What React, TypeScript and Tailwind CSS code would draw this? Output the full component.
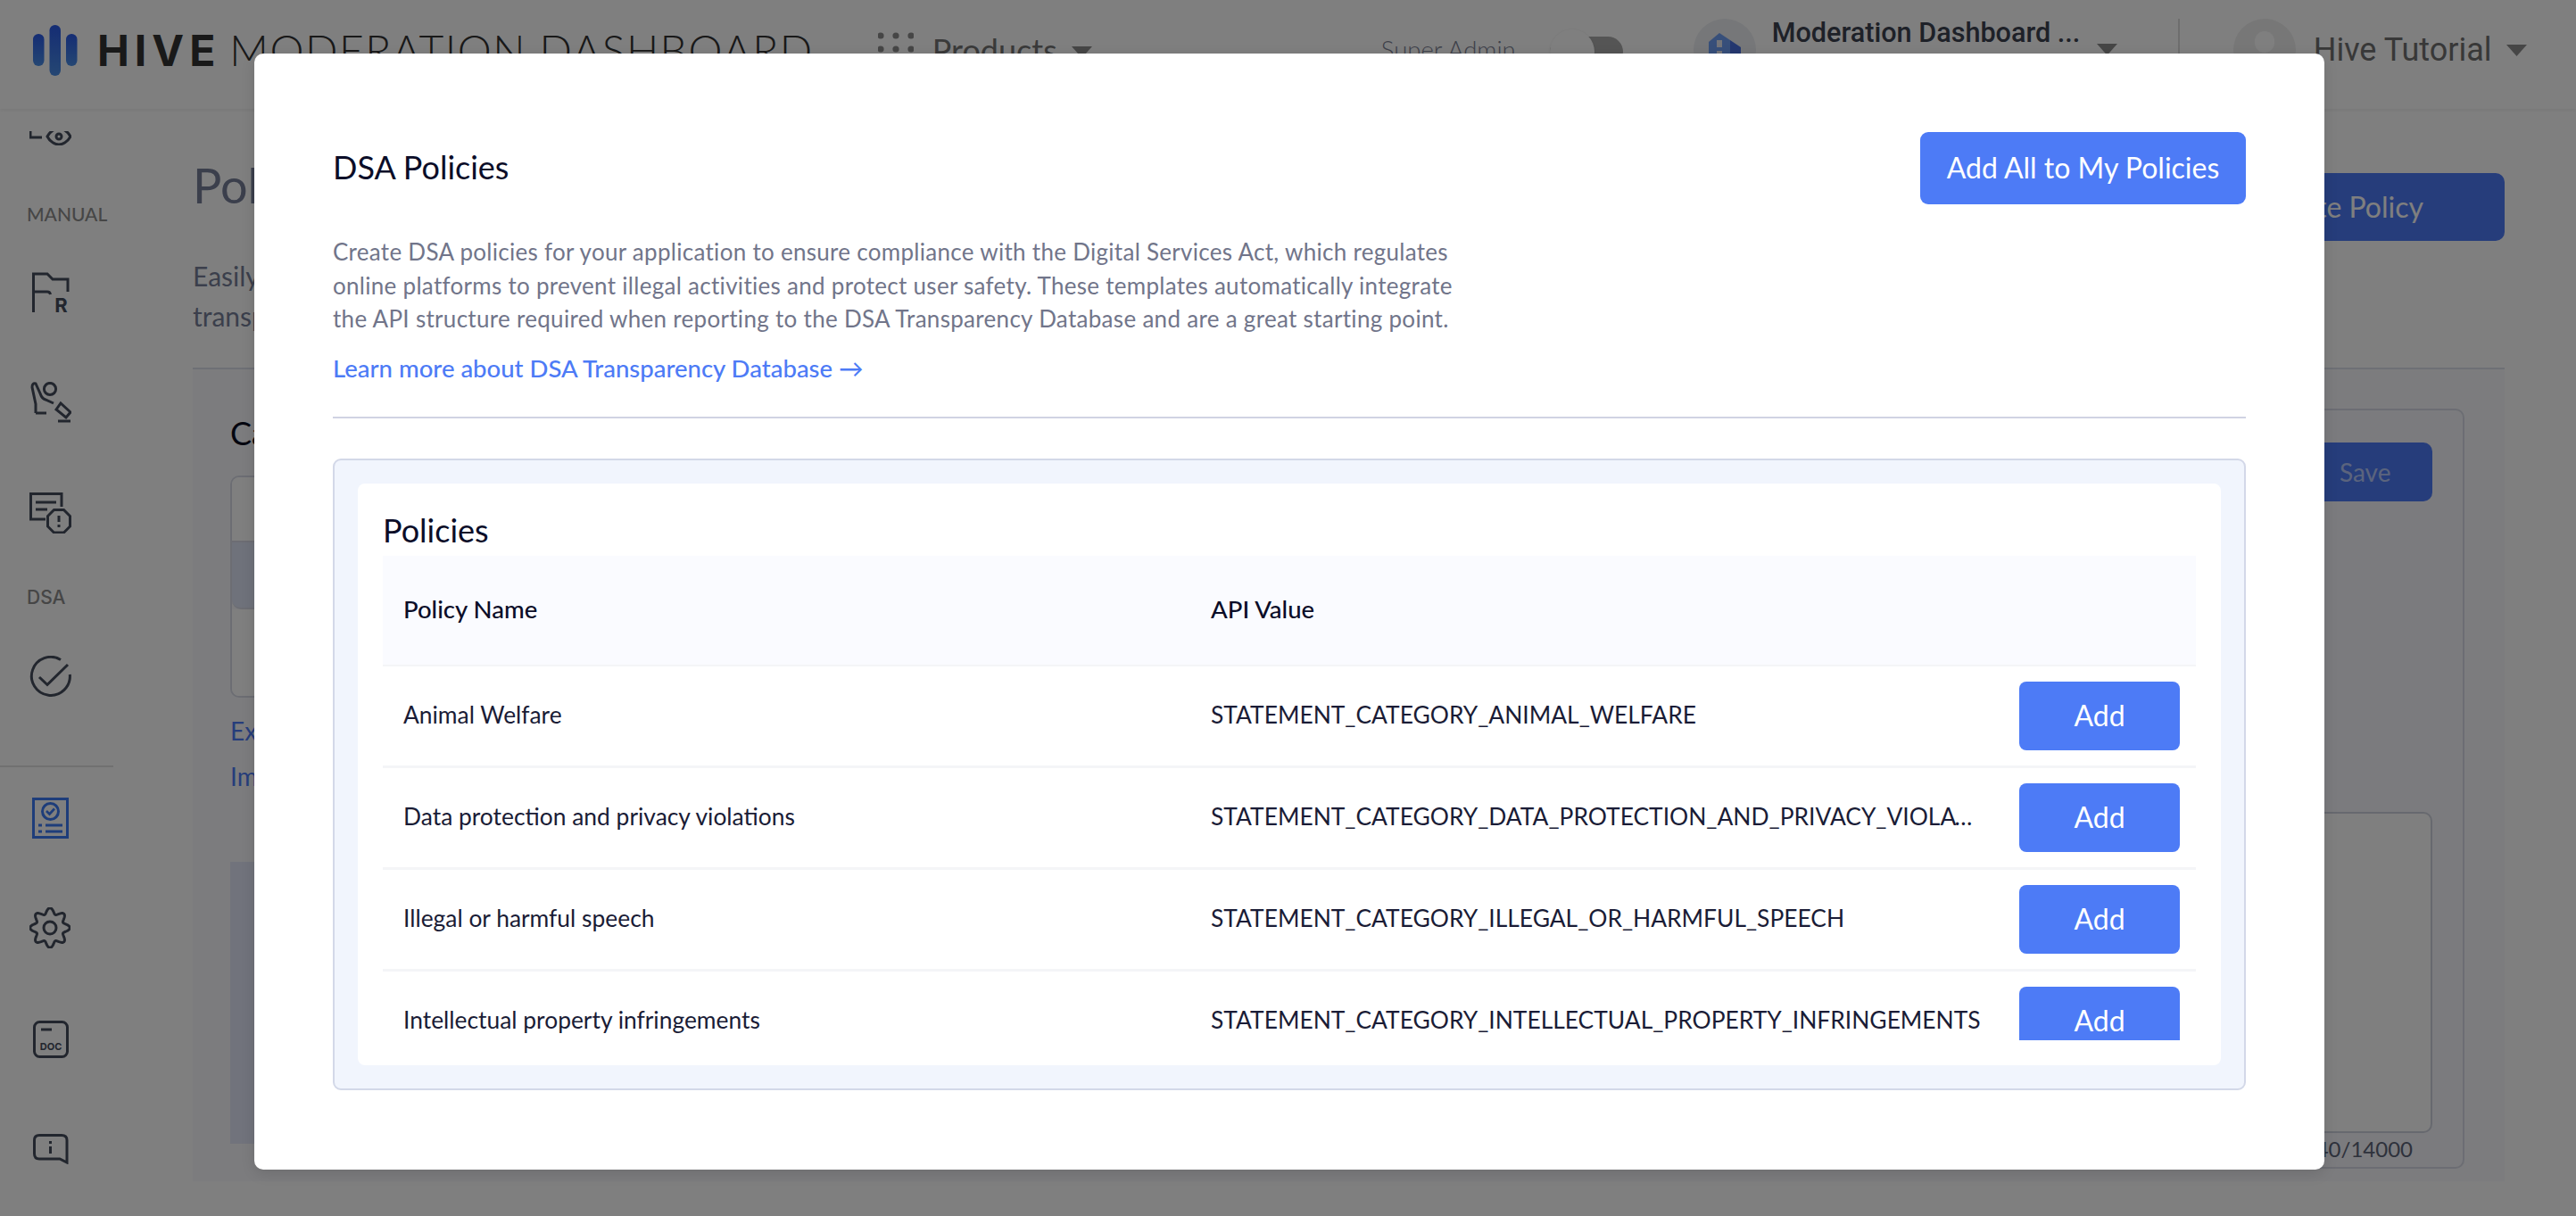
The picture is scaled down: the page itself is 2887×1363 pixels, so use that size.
import React from "react";

const gearPath = (() => {
  const pts: string[] = [];
  for (let i = 0; i < 240; i++) {
    const t = (i / 240) * Math.PI * 2;
    const r = 19 + 3.2 * Math.cos(8 * t);
    pts.push(`${(23 + r * Math.sin(t)).toFixed(2)} ${(23 - r * Math.cos(t)).toFixed(2)}`);
  }
  return "M" + pts.join("L") + "Z";
})();

const ic = "#454c5c";

function Bars() {
  return (
    <svg width="50" height="57" viewBox="0 0 50 57" className="shrink-0">
      <defs>
        <linearGradient id="hv" x1="0" y1="0" x2="0" y2="1">
          <stop offset="0" stopColor="#2a5ae8" />
          <stop offset="1" stopColor="#4a8ee6" />
        </linearGradient>
      </defs>
      <rect x="0" y="10" width="12.5" height="36" rx="6.2" fill="url(#hv)" />
      <rect x="18.5" y="0" width="12.5" height="57" rx="6.2" fill="url(#hv)" />
      <rect x="37" y="10" width="12.5" height="36" rx="6.2" fill="url(#hv)" />
    </svg>
  );
}

function Tri({ size = 23 }: { size?: number }) {
  return (
    <svg width={size} height={13} viewBox="0 0 23 13" className="shrink-0">
      <path d="M0 0H23L11.5 13Z" fill="#8c8c8c" />
    </svg>
  );
}

function Header() {
  return (
    <header className="relative flex h-[122px] shrink-0 items-center bg-white pb-[10px] pl-[37px] shadow-[0_2px_4px_rgba(0,0,0,0.06)]">
      <Bars />
      <div className="ml-[22px] whitespace-nowrap text-[48px] leading-none text-[#333]">
        <span className="font-[family-name:Inter,sans-serif] font-bold tracking-[6px]">HIVE</span>
        <span className="ml-[10px] font-light tracking-[1.5px]">MODERATION DASHBOARD</span>
      </div>
      <svg width="40" height="50" viewBox="0 0 40 50" className="ml-[72px] mt-[8px] shrink-0">
        {[3, 20, 37].map((x) =>
          [5, 20, 35].map((y) => <circle key={`${x}${y}`} cx={x} cy={y} r="3.6" fill="#8c8c8c" />)
        )}
      </svg>
      <span className="ml-[21px] text-[36px] text-[#757575]">Products</span>
      <span className="ml-[16px] mt-[4px]"><Tri /></span>
      <span className="ml-[324px] text-[27.5px] font-light text-[#7d8294]">Super Admin</span>
      <div className="ml-[38px] mt-[4px] flex h-[34px] w-[82px] items-center rounded-full bg-[#aaa]">
        <div className="h-[50px] w-[50px] shrink-0 rounded-full bg-white shadow-[0_0_3px_rgba(0,0,0,0.08)]" />
      </div>
      <div className="ml-[79px] flex h-[70px] w-[70px] shrink-0 items-start justify-center overflow-hidden rounded-full bg-[#eceef2] pt-[16px]">
        <svg width="36" height="50" viewBox="0 0 36 50" className="shrink-0">
          <path d="M0 10L12 0L24 8V50H0Z" fill="#6f9ef5" />
          <path d="M24 8L36 16V50H24Z" fill="#4a70e0" />
          <rect x="9" y="8" width="6" height="8" fill="#e6e9f2" />
          <rect x="9" y="20" width="6" height="8" fill="#e6e9f2" />
        </svg>
      </div>
      <div className="ml-[18px] -mt-[38px] w-[350px] whitespace-nowrap font-[family-name:Roboto,sans-serif] text-[30.6px] font-medium leading-[36px] text-[#3c4250]">
        Moderation Dashboard ...
      </div>
      <span className="ml-[14px] -mt-[2px]"><Tri /></span>
      <div className="ml-[68px] h-[70px] w-[2px] bg-[#ddd]" />
      <div className="ml-[60px] flex h-[70px] w-[70px] shrink-0 flex-col items-center rounded-full bg-[#eee] pt-[14px]">
        <div className="h-[24px] w-[22px] rounded-full bg-white" />
      </div>
      <span className="ml-[20px] font-[family-name:Roboto,sans-serif] text-[36px] text-[#707070]">Hive Tutorial</span>
      <span className="ml-[16px]"><Tri /></span>
    </header>
  );
}

function Sidebar() {
  const label = "text-[21px] leading-none text-[#8c8c8c] font-medium ml-[30px]";
  const stroke = { fill: "none", stroke: ic, strokeWidth: 3 };
  return (
    <aside className="flex w-[127px] shrink-0 flex-col bg-white shadow-[2px_0_4px_rgba(0,0,0,0.04)]">
      <div className="flex h-[738px] shrink-0 flex-col border-b-2 border-[#e2e2e2] pt-[25px]">
        <svg width="47" height="16" viewBox="0 0 47 16" className="ml-[33px] shrink-0">
          <path d="M1 0V7H14" {...stroke} />
          <path d="M20 6C23 0 29 -3 33 -3C37 -3 43 0 46 6C43 12 37 15 33 15C29 15 23 12 20 6Z" {...stroke} />
          <circle cx="33" cy="6" r="3" {...stroke} />
        </svg>
        <div className={`${label} mt-[66px] font-[family-name:Lato,sans-serif]`}>MANUAL</div>
        <svg width="46" height="46" viewBox="0 0 46 46" className="ml-[36px] mt-[55px] shrink-0">
          <path d="M1.5 45V2H17L23 8H40V22" {...stroke} />
          <path d="M1.5 22H17Q20 22 20.5 25" {...stroke} />
          <text x="32.5" y="44.5" textAnchor="middle" fontFamily="Inter, sans-serif" fontWeight="700" fontSize="22" fill={ic}>R</text>
        </svg>
        <svg width="47" height="46" viewBox="0 0 47 46" className="ml-[33px] mt-[77px] shrink-0">
          <path d="M7 35V25L3 6Q3 1 7 2L12 13Q14 19 18 20L27 24" {...stroke} />
          <path d="M7 35H19" {...stroke} />
          <circle cx="23" cy="8" r="6.6" {...stroke} />
          <path d="M30 31L35 24L46 34L41 40Z" {...stroke} />
          <path d="M32 44H46" {...stroke} />
        </svg>
        <svg width="47" height="46" viewBox="0 0 47 46" className="ml-[33px] mt-[78px] shrink-0">
          <path d="M36 16V1.5H1.5V30H18" {...stroke} />
          <path d="M7 11H30M7 19H20" {...stroke} />
          <path d="M27.5 19.5H38.5L45.5 26.5V38L38.5 45H27.5L20.5 38V26.5Z" {...stroke} />
          <path d="M33 26V33M33 36V39" {...stroke} />
        </svg>
        <div className={`${label} mt-[61px] font-[family-name:Inter,sans-serif]`}>DSA</div>
        <svg width="47" height="46" viewBox="0 0 47 46" className="ml-[33px] mt-[55px] shrink-0">
          <path d="M35 4.5A21.5 21.5 0 1 0 45.3 21" {...stroke} />
          <path d="M11 24L20 32.5L43 10" {...stroke} />
        </svg>
      </div>
      <div className="flex flex-col">
        <svg width="41" height="46" viewBox="0 0 41 46" className="ml-[36px] mt-[34px] shrink-0">
          <rect x="1.5" y="1.5" width="38" height="43" fill="none" stroke="#3d7bf5" strokeWidth="3" />
          <circle cx="20.5" cy="15.5" r="9" fill="none" stroke="#3d7bf5" strokeWidth="3" />
          <path d="M16 15L19.5 18.5L25 12.5" fill="none" stroke="#3d7bf5" strokeWidth="2.6" />
          <path d="M7 31H11M15 31H34M7 38H11M15 38H34" fill="none" stroke="#3d7bf5" strokeWidth="3" />
        </svg>
        <svg width="46" height="46" viewBox="0 0 46 46" className="ml-[33px] mt-[77px] shrink-0">
          <path d={gearPath} {...stroke} />
          <circle cx="23" cy="23" r="7" {...stroke} />
        </svg>
        <svg width="40" height="42" viewBox="0 0 40 42" className="ml-[37px] mt-[81px] shrink-0">
          <rect x="1.5" y="1.5" width="37" height="39" rx="6" {...stroke} />
          <path d="M9 10H21" {...stroke} />
          <text x="20" y="33" textAnchor="middle" fontFamily="Inter, sans-serif" fontWeight="700" fontSize="11" fill={ic}>DOC</text>
        </svg>
        <svg width="40" height="34" viewBox="0 0 40 34" className="ml-[37px] mt-[85px] shrink-0">
          <path d="M7 1.5H32Q38 1.5 38 7V32L30 28H7Q1.5 28 1.5 22V7Q1.5 1.5 7 1.5Z" {...stroke} />
          <path d="M19.5 8V11M19.5 14V22" {...stroke} />
        </svg>
      </div>
    </aside>
  );
}

function Background() {
  return (
    <main className="flex flex-1 flex-col bg-white pl-[89px] pr-[80px]">
      <div className="flex shrink-0 items-start justify-between">
        <div className="flex flex-col">
          <h1 className="mt-[54px] text-[54px] leading-[64px] text-[#767e98]">Policies</h1>
          <p className="mt-[47px] w-[1800px] text-[30px] leading-[45px] text-[#767e98]">
            Easily create and manage your policies
            <br />
            transparently
          </p>
        </div>
        <button className="mt-[72px] flex h-[76px] w-[360px] items-center justify-end rounded-[10px] bg-[#4d7bf6] pr-[91px] text-[32px] text-white">
          Create Policy
        </button>
      </div>
      <div className="mt-[35px] flex h-[912px] shrink-0 flex-col border-t-2 border-[#dde0ea] bg-[#f8f9fd] pl-[42px] pr-[45px] pt-[51px]">
        <div className="flex h-[849px] shrink-0">
          <div className="flex w-[600px] shrink-0 flex-col">
            <div className="-mt-[2px] text-[36px] leading-[44px] text-[#0a0c20]">Categories</div>
            <div className="mt-[26px] flex h-[249px] flex-col overflow-hidden rounded-[10px] border-2 border-[#d8dbe6]">
              <div className="h-[73px] border-b-2 border-[#d8dbe6] bg-[#fff]" />
              <div className="h-[75px] rounded-b-[10px] border-b-2 border-[#d8dbe6] bg-[#dfe4f6]" />
              <div className="flex-1 bg-white" />
            </div>
            <div className="mt-[20px] text-[28px] leading-[34px] text-[#4d7bf6]">Export</div>
            <div className="mt-[17px] text-[28px] leading-[34px] text-[#4d7bf6]">Import</div>
            <div className="mt-[79px] h-[316px] bg-[#e2e7f8]" />
          </div>
          <div className="ml-auto -mt-[7px] flex h-[852px] w-[1200px] flex-col self-start rounded-[10px] border-2 border-[#d8dbe6] bg-[#f6f7fc] pb-[9px] pr-[34px]">
            <div className="mt-[36px] flex justify-end">
              <button className="h-[66px] w-[280px] rounded-[10px] bg-[#4d7bf6] pl-[176px] text-left text-[28px] text-white/60">Save</button>
            </div>
            <div className="mt-[348px] h-[360px] shrink-0 rounded-[10px] border-2 border-[#cfd2de] bg-[#ffffff]" />
            <div className="mt-[2px] pr-[22px] text-right text-[24px] leading-[32px] text-[#5d6478]">40/14000</div>
          </div>
        </div>
      </div>
    </main>
  );
}

const rows: [string, string][] = [
  ["Animal Welfare", "STATEMENT_CATEGORY_ANIMAL_WELFARE"],
  ["Data protection and privacy violations", "STATEMENT_CATEGORY_DATA_PROTECTION_AND_PRIVACY_VIOLATIONS"],
  ["Illegal or harmful speech", "STATEMENT_CATEGORY_ILLEGAL_OR_HARMFUL_SPEECH"],
  ["Intellectual property infringements", "STATEMENT_CATEGORY_INTELLECTUAL_PROPERTY_INFRINGEMENTS"],
];

function Modal() {
  return (
    <div className="absolute left-[285px] top-[60px] flex h-[1251px] w-[2320px] flex-col rounded-[10px] bg-white p-[88px] shadow-[0_4px_16px_rgba(0,0,0,0.12)]">
      <div className="flex shrink-0 items-start justify-between">
        <h2 className="mt-[16px] text-[36px] leading-[46px] text-[#0b0d28]">DSA Policies</h2>
        <button className="h-[81px] w-[365px] rounded-[9px] bg-[#4d7bf6] pb-[2px] text-[32px] text-white">Add All to My Policies</button>
      </div>
      <div className="mt-[35px] shrink-0 whitespace-nowrap text-[26px] leading-[37.5px] text-[#71758a]">
        <div className="tracking-[0.29px]">Create DSA policies for your application to ensure compliance with the Digital Services Act, which regulates</div>
        <div className="tracking-[0.29px]">online platforms to prevent illegal activities and protect user safety. These templates automatically integrate</div>
        <div className="tracking-[0.3px]">the API structure required when reporting to the DSA Transparency Database and are a great starting point.</div>
      </div>
      <a className="mt-[17px] block shrink-0 text-[27.5px] font-medium leading-[37px] text-[#4d7bf6]">
        Learn more about DSA Transparency Database →
      </a>
      <div className="mt-[36px] h-[2px] shrink-0 bg-[#d0d3e3]" />
      <div className="mt-[45px] flex h-[708px] shrink-0 flex-col rounded-[9px] border-2 border-[#d3d8e8] bg-[#f1f5fd] p-[26px]">
        <div className="flex flex-1 flex-col rounded-[8px] bg-white px-[28px] pb-[27px]">
          <div className="h-[81px] shrink-0 pt-[29px] text-[36px] leading-[46px] text-[#0b0d28]">Policies</div>
          <div className="h-[543px] shrink-0 overflow-hidden">
            <div className="flex h-[124px] items-center border-b-[2px] border-[#f4f5f7] bg-[#fafbff] pb-[2px] pl-[23px] text-[27.5px] font-medium text-[#0b0d28]">
              <div className="w-[905px] shrink-0">Policy Name</div>
              <div>API Value</div>
            </div>
            {rows.map(([name, api]) => (
              <div key={api} className="flex h-[114px] items-center border-b-[3px] border-[#f4f5f7] pl-[23px] text-[26.4px] text-[#1a1c36]">
                <div className="w-[905px] shrink-0">{name}</div>
                <div className="w-[864px] shrink-0 truncate">{api}</div>
                <button className="ml-auto mr-[18px] h-[77px] w-[180px] rounded-[8px] bg-[#4d7bf6] text-[32px] text-white">Add</button>
              </div>
            ))}
          </div>
        </div>
      </div>
    </div>
  );
}

export default function App() {
  return (
    <div className="relative flex h-[1363px] w-[2887px] flex-col overflow-hidden bg-white font-[family-name:Lato,sans-serif]">
      <Header />
      <div className="flex min-h-0 flex-1">
        <Sidebar />
        <Background />
      </div>
      <div className="absolute inset-0 bg-black/50" />
      <Modal />
    </div>
  );
}
